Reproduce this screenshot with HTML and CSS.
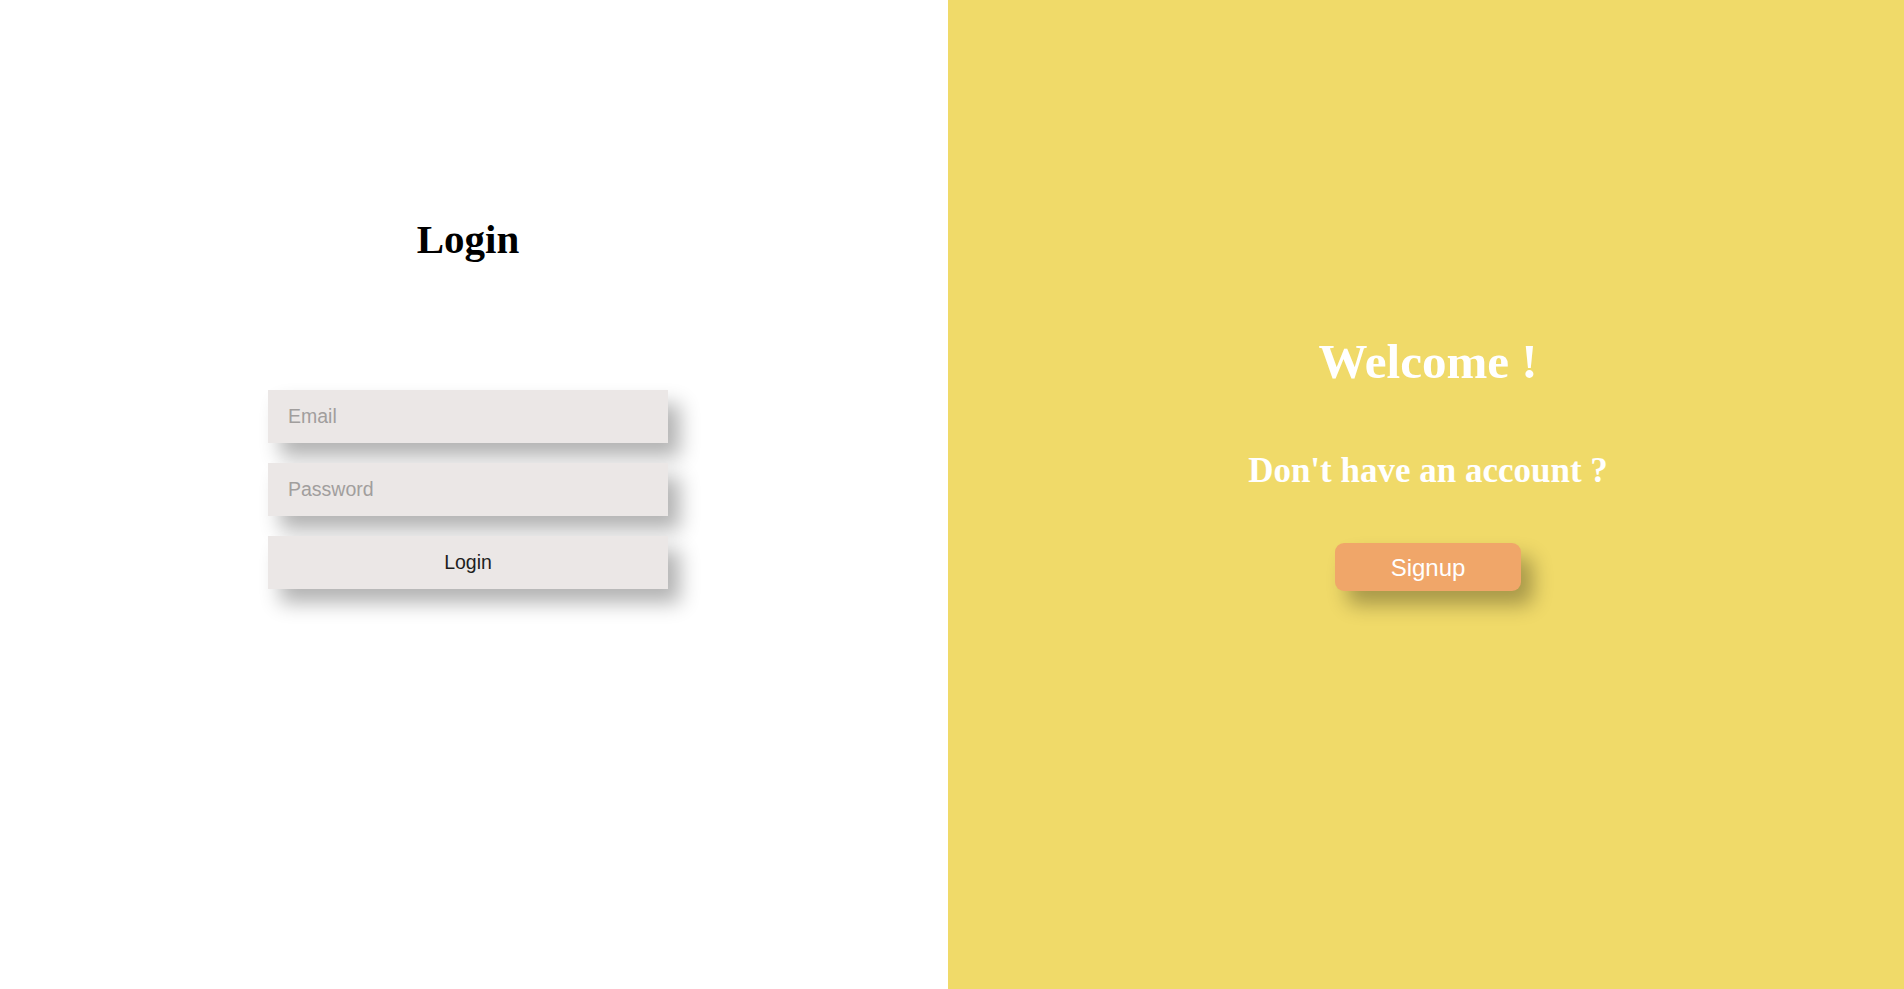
FILE: index.html
```html
<!DOCTYPE html>
<html lang="en">
<head>
<meta charset="utf-8">
<title>Login</title>
<link rel="stylesheet" href="styles.css">
</head>
<body>
<main class="page">
  <section class="login-panel">
    <h1 class="login-title">Login</h1>
    <form class="login-form">
      <input class="field" type="email" placeholder="Email">
      <input class="field" type="password" placeholder="Password">
      <button class="field login-btn" type="button">Login</button>
    </form>
  </section>
  <section class="welcome-panel">
    <h2 class="welcome-title">Welcome !</h2>
    <h3 class="welcome-sub">Don't have an account ?</h3>
    <button class="signup-btn" type="button">Signup</button>
  </section>
</main>
</body>
</html>
```

FILE: styles.css
```css
html, body {
  margin: 0;
  padding: 0;
  height: 100%;
}

body {
  font-family: "Liberation Serif", "Times New Roman", serif;
  background: #ffffff;
}

.page {
  display: flex;
  height: 989px;
}

.login-panel {
  width: 948px;
  box-sizing: border-box;
  padding: 217px 12px 0 0;
  display: flex;
  flex-direction: column;
  align-items: center;
  background: #ffffff;
}

.login-title {
  margin: 0;
  font-size: 41px;
  font-weight: bold;
  color: #000;
  line-height: 45px;
}

.login-form {
  margin-top: 128px;
  display: flex;
  flex-direction: column;
  gap: 20px;
  width: 400px;
}

.field {
  display: block;
  width: 400px;
  height: 53px;
  box-sizing: border-box;
  border: none;
  outline: none;
  background: #ebe7e6;
  padding: 0 20px;
  font-family: "Liberation Sans", Arial, sans-serif;
  font-size: 19.5px;
  color: #222;
  box-shadow: 12px 14px 20px rgba(0, 0, 0, 0.3);
}

.field::placeholder {
  color: #a19e9d;
}

.login-btn {
  text-align: center;
  color: #1e1e1e;
  cursor: pointer;
}

.welcome-panel {
  flex: 1;
  background: #f0da69;
  display: flex;
  flex-direction: column;
  align-items: center;
  padding: 335px 0 0 4px;
  box-sizing: border-box;
}

.welcome-title {
  margin: 0;
  font-size: 49px;
  line-height: 54px;
  font-weight: bold;
  color: #ffffff;
}

.welcome-sub {
  margin: 62px 0 0;
  font-size: 35px;
  line-height: 39px;
  font-weight: bold;
  color: #ffffff;
}

.signup-btn {
  margin-top: 53px;
  width: 186px;
  height: 48px;
  padding: 2px 0 0;
  border: none;
  border-radius: 9px;
  background: #f0a669;
  color: #ffffff;
  font-family: "Liberation Sans", Arial, sans-serif;
  font-size: 24px;
  cursor: pointer;
  box-shadow: 12px 14px 20px rgba(0, 0, 0, 0.3);
}
```
